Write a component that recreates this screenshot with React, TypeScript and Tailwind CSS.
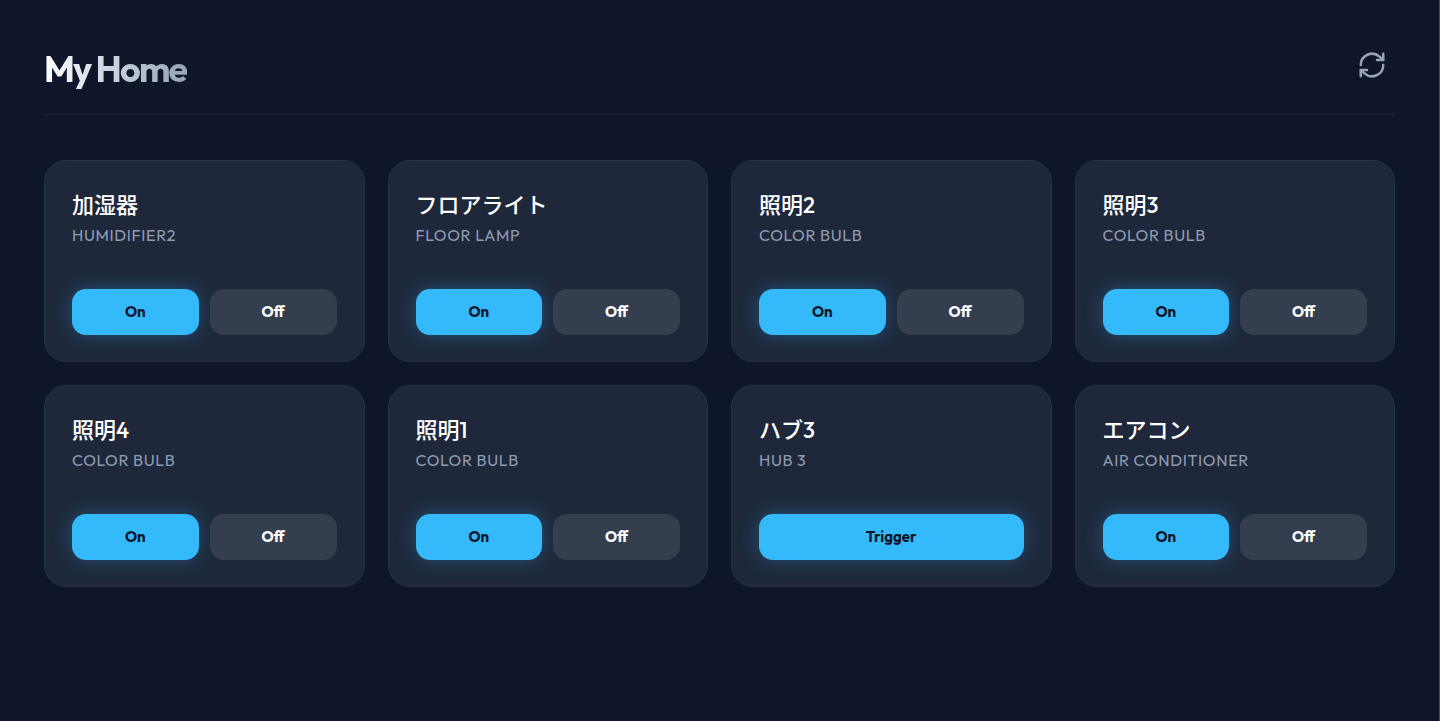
import React from 'react';

type Device = {
  name: string;
  type: string;
  trigger?: boolean;
};

const devices: Device[] = [
  { name: '加湿器', type: 'Humidifier2' },
  { name: 'フロアライト', type: 'Floor Lamp' },
  { name: '照明2', type: 'Color Bulb' },
  { name: '照明3', type: 'Color Bulb' },
  { name: '照明4', type: 'Color Bulb' },
  { name: '照明1', type: 'Color Bulb' },
  { name: 'ハブ3', type: 'Hub 3', trigger: true },
  { name: 'エアコン', type: 'Air Conditioner' },
];

const primaryButton =
  'h-[46px] flex-1 rounded-[14px] bg-[#34bafa] text-[15px] leading-6 font-bold text-[#0f1629] shadow-[0_0_20px_rgba(56,175,248,0.3)]';
const secondaryButton =
  'h-[46px] flex-1 rounded-[14px] bg-[#353e4e] text-[15px] leading-6 font-bold text-white';

function RefreshIcon() {
  return (
    <svg
      className="h-[30px] w-[30px]"
      viewBox="0 0 24 24"
      fill="none"
      stroke="currentColor"
      strokeWidth="2"
      strokeLinecap="round"
      strokeLinejoin="round"
      aria-hidden="true"
    >
      <path d="M21 3v5h-5" />
      <path d="M3 12a9 9 0 0 1 15-6.7L21 8" />
      <path d="M3 21v-5h5" />
      <path d="M21 12a9 9 0 0 1-15 6.7L3 16" />
    </svg>
  );
}

function DeviceCard({ device }: { device: Device }) {
  return (
    <div className="rounded-[22px] border border-[#273346] bg-[#1e283a] px-[27px] pt-[27px] pb-[26px]">
      <h2 className="text-[22px] leading-[35px] font-medium text-white">{device.name}</h2>
      <p className="text-base leading-6 tracking-[0.04em] text-[#8e9bb3] uppercase">{device.type}</p>
      <div className="mt-[42px] flex gap-[11px]">
        {device.trigger ? (
          <button type="button" className={primaryButton}>Trigger</button>
        ) : (
          <>
            <button type="button" className={primaryButton}>On</button>
            <button type="button" className={secondaryButton}>Off</button>
          </>
        )}
      </div>
    </div>
  );
}

export default function App() {
  return (
    <div className="min-h-screen border-r border-[#4b505c] bg-[#0f1629] px-11 pt-11 pb-11 font-['Outfit','Noto_Sans_CJK_JP',sans-serif]">
      <header className="flex items-start justify-between border-b border-[#20273a] pb-5">
        <h1 className="bg-linear-to-r from-white to-[#94a3b8] bg-clip-text text-[36px] leading-[50px] font-bold tracking-tighter text-transparent">
          My Home
        </h1>
        <button type="button" aria-label="Refresh" className="px-2 py-1.5 text-[#94a3b8]">
          <RefreshIcon />
        </button>
      </header>

      <main className="mt-[45px] grid grid-cols-1 gap-[23px] sm:grid-cols-2 lg:grid-cols-4">
        {devices.map((device) => (
          <DeviceCard key={device.name} device={device} />
        ))}
      </main>
    </div>
  );
}
